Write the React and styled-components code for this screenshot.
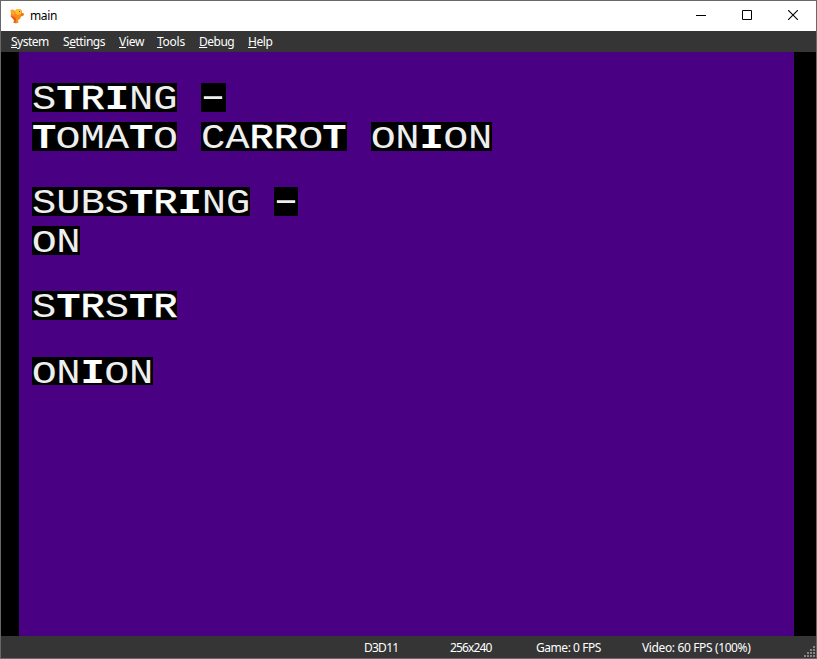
import React from 'react';
import styled, { createGlobalStyle } from 'styled-components';

const GlobalStyle = createGlobalStyle`
  * { box-sizing: border-box; }
  html, body { margin: 0; padding: 0; overflow: hidden; }
`;

const Window = styled.div`
  width: 817px;
  height: 659px;
  display: flex;
  flex-direction: column;
  border: 1px solid #686868;
  background: #353535;
  font-family: "Noto Sans", "Open Sans", sans-serif;
  font-size: 12px;
  color: #fff;
  overflow: hidden;
`;

const TitleBar = styled.header`
  display: flex;
  align-items: center;
  flex: 0 0 30px;
  padding-left: 8px;
  background: #fff;
  color: #000;
`;

const Title = styled.span`
  flex: 1;
  margin-left: 5px;
  line-height: 16px;
  letter-spacing: -0.35px;
`;

const WindowButton = styled.button`
  width: 46px;
  height: 30px;
  padding: 0 0 2px;
  border: 0;
  background: none;
  display: grid;
  place-items: center;
`;

const MenuBar = styled.nav`
  display: flex;
  flex: 0 0 21px;
  padding-left: 10px;
  line-height: 21px;
`;

const MenuItem = styled.span`
  flex: 0 0 ${(p) => p.$slot}px;
  letter-spacing: ${(p) => p.$tracking}px;
  white-space: nowrap;
`;

const Mnemonic = styled.span`
  text-decoration: underline;
  text-decoration-thickness: 1px;
  text-underline-offset: 1px;
`;

const Viewport = styled.main`
  flex: 0 0 584px;
  padding: 0 22px 0 18px;
  background: #000;
`;

const Screen = styled.div`
  height: 100%;
  padding: 31px 0 0 12.6px;
  background: #490082;
`;

const Line = styled.div`
  display: flex;
  gap: 24.3px;
  height: 28.5px;
  margin-bottom: ${(p) => p.$gap}px;
`;

const WordBox = styled.div`
  width: ${(p) => p.$cells * 24.25}px;
  height: 28.5px;
  background: #000;
`;

const WordText = styled.div`
  width: max-content;
  height: 28.5px;
  font: 34px/28.5px "Liberation Mono", monospace;
  letter-spacing: -0.03px;
  color: #eee;
  transform: translateY(1.9px) scale(1.19, 1.05);
  transform-origin: 0 0;
  white-space: pre;
`;

const Heavy = styled.b`
  color: #fff;
`;

const Firm = styled.span`
  color: #fff;
  -webkit-text-stroke: 0.5px #fff;
`;

const LowO = styled.span`
  display: inline-block;
  height: 28.5px;
  transform: scale(1.03, 0.87);
  transform-origin: 50% 24px;
`;

const Dash = styled.span`
  display: inline-block;
  height: 28.5px;
  transform: translateY(-1.6px) scale(1.65, 1);
  transform-origin: 50% 50%;
`;

const StatusBar = styled.footer`
  display: flex;
  flex: 1;
  padding-left: 363px;
  line-height: 23px;
`;

const StatusItem = styled.span`
  flex: 0 0 ${(p) => p.$slot}px;
  letter-spacing: ${(p) => p.$tracking}px;
  white-space: nowrap;
`;

const Grip = styled.svg`
  margin: 10px 1px 0 auto;
`;

const lines = [
  { words: ['STRING', '-'], gap: 10.7 },
  { words: ['TOMATO', 'CARROT', 'ONION'], gap: 36.5 },
  { words: ['SUBSTRING', '-'], gap: 10.7 },
  { words: ['ON'], gap: 36.5 },
  { words: ['STRSTR'], gap: 36.8 },
  { words: ['ONION'], gap: 0 },
];

const menus = [
  ['', 'S', 'ystem', 52, -0.5],
  ['S', 'e', 'ttings', 56, -0.45],
  ['', 'V', 'iew', 38, -0.3],
  ['', 'T', 'ools', 42, -0.25],
  ['', 'D', 'ebug', 49, -0.5],
  ['', 'H', 'elp', 40, -0.4],
];

const statuses = [
  ['D3D11', 86, -0.75],
  ['256x240', 86, -0.85],
  ['Game: 0 FPS', 106, -0.45],
  ['Video: 60 FPS (100%)', 130, -0.37],
];

const gripDots = [0, 1, 2, 3].flatMap((row) =>
  [0, 1, 2, 3].filter((col) => col + row >= 3).map((col) => ({ x: col * 3, y: row * 3 })),
);

function Glyph({ char }) {
  if (char === 'T' || char === 'I') return <Heavy>{char}</Heavy>;
  if (char === 'R') return <Firm>{char}</Firm>;
  if (char === 'O') return <LowO>{char}</LowO>;
  if (char === '-') return <Dash>{char}</Dash>;
  return char;
}

function Word({ text }) {
  return (
    <WordBox $cells={text.length}>
      <WordText>
        {[...text].map((char, i) => <Glyph key={i} char={char} />)}
      </WordText>
    </WordBox>
  );
}

function BirdIcon() {
  return (
    <svg width="16" height="16" viewBox="0 0 16 16">
      <path d="M1.5 2L4 1.5 6 3l2-2h3l2 2v2l2 .5-1 2.500-2 .5-1 2.500-2 1 .5 2.500-2.500 1-3-1 1.500-1.500-2-2.500L1.500 8l.5-2z" fill="#f98a1c" />
      <path d="M6 3l2-2h3l1.500 2-.5 3-3 1-2-1z" fill="#ffbe2e" />
      <path d="M2 2l2.500.5L6 5l-1 2-3-2z" fill="#ffa43a" />
      <path d="M1.500 8l3 .5L7 10.500 6.500 15l-2-1 1-1.500-2-2.500z" fill="#e2581a" />
      <path d="M12 5.500l3 .2-1 2.300-2-.5z" fill="#f46a10" />
      <path d="M10 3h1v1h-1z" fill="#8a4a10" />
    </svg>
  );
}

export default function App() {
  return (
    <>
      <GlobalStyle />
      <Window>
        <TitleBar>
          <BirdIcon />
          <Title>main</Title>
          <WindowButton aria-label="Minimize">
            <svg width="10" height="10"><path d="M0 5.5h10" stroke="#000" /></svg>
          </WindowButton>
          <WindowButton aria-label="Maximize">
            <svg width="10" height="10"><path d="M.5.5h9v9h-9z" stroke="#000" fill="none" /></svg>
          </WindowButton>
          <WindowButton aria-label="Close">
            <svg width="10" height="10"><path d="M0 0l10 10M10 0L0 10" stroke="#000" strokeWidth="1.1" /></svg>
          </WindowButton>
        </TitleBar>
        <MenuBar>
          {menus.map(([before, key, after, slot, tracking]) => (
            <MenuItem key={after} $slot={slot} $tracking={tracking}>
              {before}<Mnemonic>{key}</Mnemonic>{after}
            </MenuItem>
          ))}
        </MenuBar>
        <Viewport>
          <Screen>
            {lines.map((line, i) => (
              <Line key={i} $gap={line.gap}>
                {line.words.map((word) => <Word key={word} text={word} />)}
              </Line>
            ))}
          </Screen>
        </Viewport>
        <StatusBar>
          {statuses.map(([text, slot, tracking]) => (
            <StatusItem key={text} $slot={slot} $tracking={tracking}>{text}</StatusItem>
          ))}
          <Grip width="11" height="11" fill="#858585">
            {gripDots.map(({ x, y }) => <rect key={`${x}-${y}`} x={x} y={y} width="2" height="2" />)}
          </Grip>
        </StatusBar>
      </Window>
    </>
  );
}
